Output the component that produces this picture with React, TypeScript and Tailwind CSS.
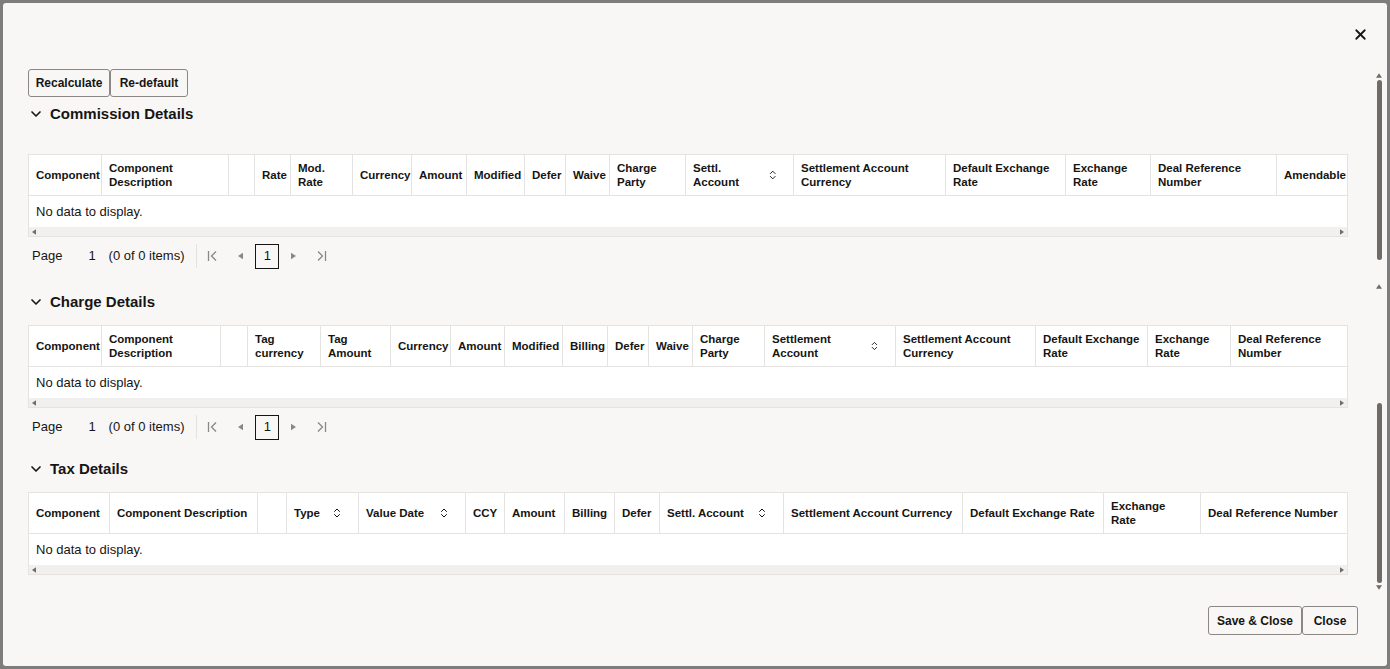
import { ChevronDown, X, ChevronsUpDown } from "lucide-react";

type Col = { label: string; w: string; sort?: boolean };

const commission: Col[] = [
  { label: "Component", w: "w-[73px]" },
  { label: "Component Description", w: "w-[127px]" },
  { label: "", w: "w-[26px]" },
  { label: "Rate", w: "w-[36px]" },
  { label: "Mod. Rate", w: "w-[62px]" },
  { label: "Currency", w: "w-[59px]" },
  { label: "Amount", w: "w-[55px]" },
  { label: "Modified", w: "w-[58px]" },
  { label: "Defer", w: "w-[41px]" },
  { label: "Waive", w: "w-[44px]" },
  { label: "Charge Party", w: "w-[76px]" },
  { label: "Settl. Account", w: "w-[108px]", sort: true },
  { label: "Settlement Account Currency", w: "w-[152px]" },
  { label: "Default Exchange Rate", w: "w-[120px]" },
  { label: "Exchange Rate", w: "w-[85px]" },
  { label: "Deal Reference Number", w: "w-[126px]" },
  { label: "Amendable", w: "w-[71px]" },
];

const charge: Col[] = [
  { label: "Component", w: "w-[73px]" },
  { label: "Component Description", w: "w-[119px]" },
  { label: "", w: "w-[27px]" },
  { label: "Tag currency", w: "w-[73px]" },
  { label: "Tag Amount", w: "w-[70px]" },
  { label: "Currency", w: "w-[60px]" },
  { label: "Amount", w: "w-[54px]" },
  { label: "Modified", w: "w-[58px]" },
  { label: "Billing", w: "w-[45px]" },
  { label: "Defer", w: "w-[41px]" },
  { label: "Waive", w: "w-[44px]" },
  { label: "Charge Party", w: "w-[72px]" },
  { label: "Settlement Account", w: "w-[131px]", sort: true },
  { label: "Settlement Account Currency", w: "w-[140px]" },
  { label: "Default Exchange Rate", w: "w-[112px]" },
  { label: "Exchange Rate", w: "w-[83px]" },
  { label: "Deal Reference Number", w: "w-[117px]" },
];

const tax: Col[] = [
  { label: "Component", w: "w-[81px]" },
  { label: "Component Description", w: "w-[148px]" },
  { label: "", w: "w-[29px]" },
  { label: "Type", w: "w-[72px]", sort: true },
  { label: "Value Date", w: "w-[107px]", sort: true },
  { label: "CCY", w: "w-[39px]" },
  { label: "Amount", w: "w-[60px]" },
  { label: "Billing", w: "w-[50px]" },
  { label: "Defer", w: "w-[45px]" },
  { label: "Settl. Account", w: "w-[124px]", sort: true },
  { label: "Settlement Account Currency", w: "w-[179px]" },
  { label: "Default Exchange Rate", w: "w-[141px]" },
  { label: "Exchange Rate", w: "w-[97px]" },
  { label: "Deal Reference Number", w: "w-[147px]" },
];

function Tri({ dir, className = "" }: { dir: "l" | "r" | "u" | "d"; className?: string }) {
  const pts = { l: "6,0 6,8 0,4", r: "0,0 0,8 6,4", u: "0,6 8,6 4,0", d: "0,0 8,0 4,6" }[dir];
  const vb = dir === "l" || dir === "r" ? "0 0 6 8" : "0 0 8 6";
  return (
    <svg viewBox={vb} className={className} fill="currentColor">
      <polygon points={pts} />
    </svg>
  );
}

function Section({ title, mt }: { title: string; mt: string }) {
  return (
    <div className={`flex items-center gap-[6px] ${mt} h-[22px]`}>
      <ChevronDown className="w-4 h-4 text-[#161513]" strokeWidth={2.5} />
      <span className="text-[15px] font-bold text-[#161513]">{title}</span>
    </div>
  );
}

function Grid({ cols, mt }: { cols: Col[]; mt: string }) {
  return (
    <div className={`${mt} w-[1320px] overflow-hidden border border-[#e4e3e1] bg-white`}>
      <div className="flex h-[41px] border-b border-[#e4e3e1]">
        {cols.map((c, i) => (
          <div
            key={i}
            className={`${c.w} shrink-0 flex items-center justify-between px-[7px] text-[11.5px] leading-[14px] font-bold text-[#161513] ${i < cols.length - 1 ? "border-r border-[#e4e3e1]" : ""}`}
          >
            <span>{c.label}</span>
            {c.sort && <ChevronsUpDown className="w-3 h-3 mr-[8px] text-[#161513]" />}
          </div>
        ))}
      </div>
      <div className="h-[31px] flex items-center px-[7px] text-[13px] text-[#161513]">No data to display.</div>
      <div className="h-[9px] bg-[#f1f0ef] flex items-center justify-between px-[3px] text-[#6f6c68]">
        <Tri dir="l" className="w-[4px] h-[6px]" />
        <Tri dir="r" className="w-[4px] h-[6px]" />
      </div>
    </div>
  );
}

function Pager({ mt }: { mt: string }) {
  return (
    <div className={`${mt} flex items-center h-[28px] text-[13px] text-[#161513]`}>
      <span className="ml-[4px]">Page</span>
      <span className="ml-[26px]">1</span>
      <span className="ml-[13px]">(0 of 0 items)</span>
      <div className="ml-[12px] h-[24px] border-l border-[#e4e3e1]" />
      <svg viewBox="0 0 12 12" className="ml-[10px] w-[12px] h-[12px] text-[#8a8784]" fill="none" stroke="currentColor" strokeWidth="1.3">
        <path d="M1.5 1v10M9 1.5 4.5 6 9 10.5" />
      </svg>
      <Tri dir="l" className="ml-[19px] w-[5px] h-[8px] text-[#8a8784]" />
      <div className="ml-[12px] w-[24px] h-[25px] border border-[#161513] flex items-center justify-center">1</div>
      <Tri dir="r" className="ml-[12px] w-[5px] h-[8px] text-[#8a8784]" />
      <svg viewBox="0 0 12 12" className="ml-[19px] w-[12px] h-[12px] text-[#8a8784]" fill="none" stroke="currentColor" strokeWidth="1.3">
        <path d="M10.5 1v10M3 1.5 7.5 6 3 10.5" />
      </svg>
    </div>
  );
}

export default function App() {
  return (
    <div className="w-[1390px] h-[669px] bg-[#7d7d7d] p-[3px] font-[Liberation_Sans]">
      <div className="relative w-full h-full bg-[#f8f7f6] rounded-[3px] px-[25px] flex flex-col">
        <X className="absolute right-[18px] top-[23px] w-[17px] h-[17px] text-[#161513]" strokeWidth={2.5} />
        <div className="absolute right-[4px] top-[70px] w-[8px] h-[522px] flex flex-col items-center text-[#6f6c68]">
          <Tri dir="u" className="w-[6px] h-[5px]" />
          <div className="mt-[2px] w-[5px] h-[180px] bg-[#6f6c68] rounded" />
          <Tri dir="u" className="mt-[24px] w-[6px] h-[5px]" />
          <div className="mt-[114px] w-[5px] h-[180px] bg-[#6f6c68] rounded" />
          <Tri dir="d" className="mt-[2px] w-[6px] h-[5px]" />
        </div>
        <div className="mt-[66px] flex">
          <button className="w-[82px] h-[28px] border border-[#8a8784] rounded-[3px] bg-[#f8f7f6] text-[12px] font-bold text-[#161513]">Recalculate</button>
          <button className="w-[78px] h-[28px] border border-[#8a8784] rounded-[3px] bg-[#f8f7f6] text-[12px] font-bold text-[#161513]">Re-default</button>
        </div>
        <Section title="Commission Details" mt="mt-[6px]" />
        <Grid cols={commission} mt="mt-[29px]" />
        <Pager mt="mt-[5px]" />
        <Section title="Charge Details" mt="mt-[21px]" />
        <Grid cols={charge} mt="mt-[12px]" />
        <Pager mt="mt-[5px]" />
        <Section title="Tax Details" mt="mt-[17px]" />
        <Grid cols={tax} mt="mt-[12px]" />
        <div className="mt-[31px] flex justify-end mr-[4px]">
          <button className="w-[94px] h-[29px] border border-[#8a8784] rounded-[3px] bg-[#f8f7f6] text-[12px] font-bold text-[#161513]">Save &amp; Close</button>
          <button className="w-[56px] h-[29px] border border-[#8a8784] rounded-[3px] bg-[#f8f7f6] text-[12px] font-bold text-[#161513]">Close</button>
        </div>
      </div>
    </div>
  );
}
